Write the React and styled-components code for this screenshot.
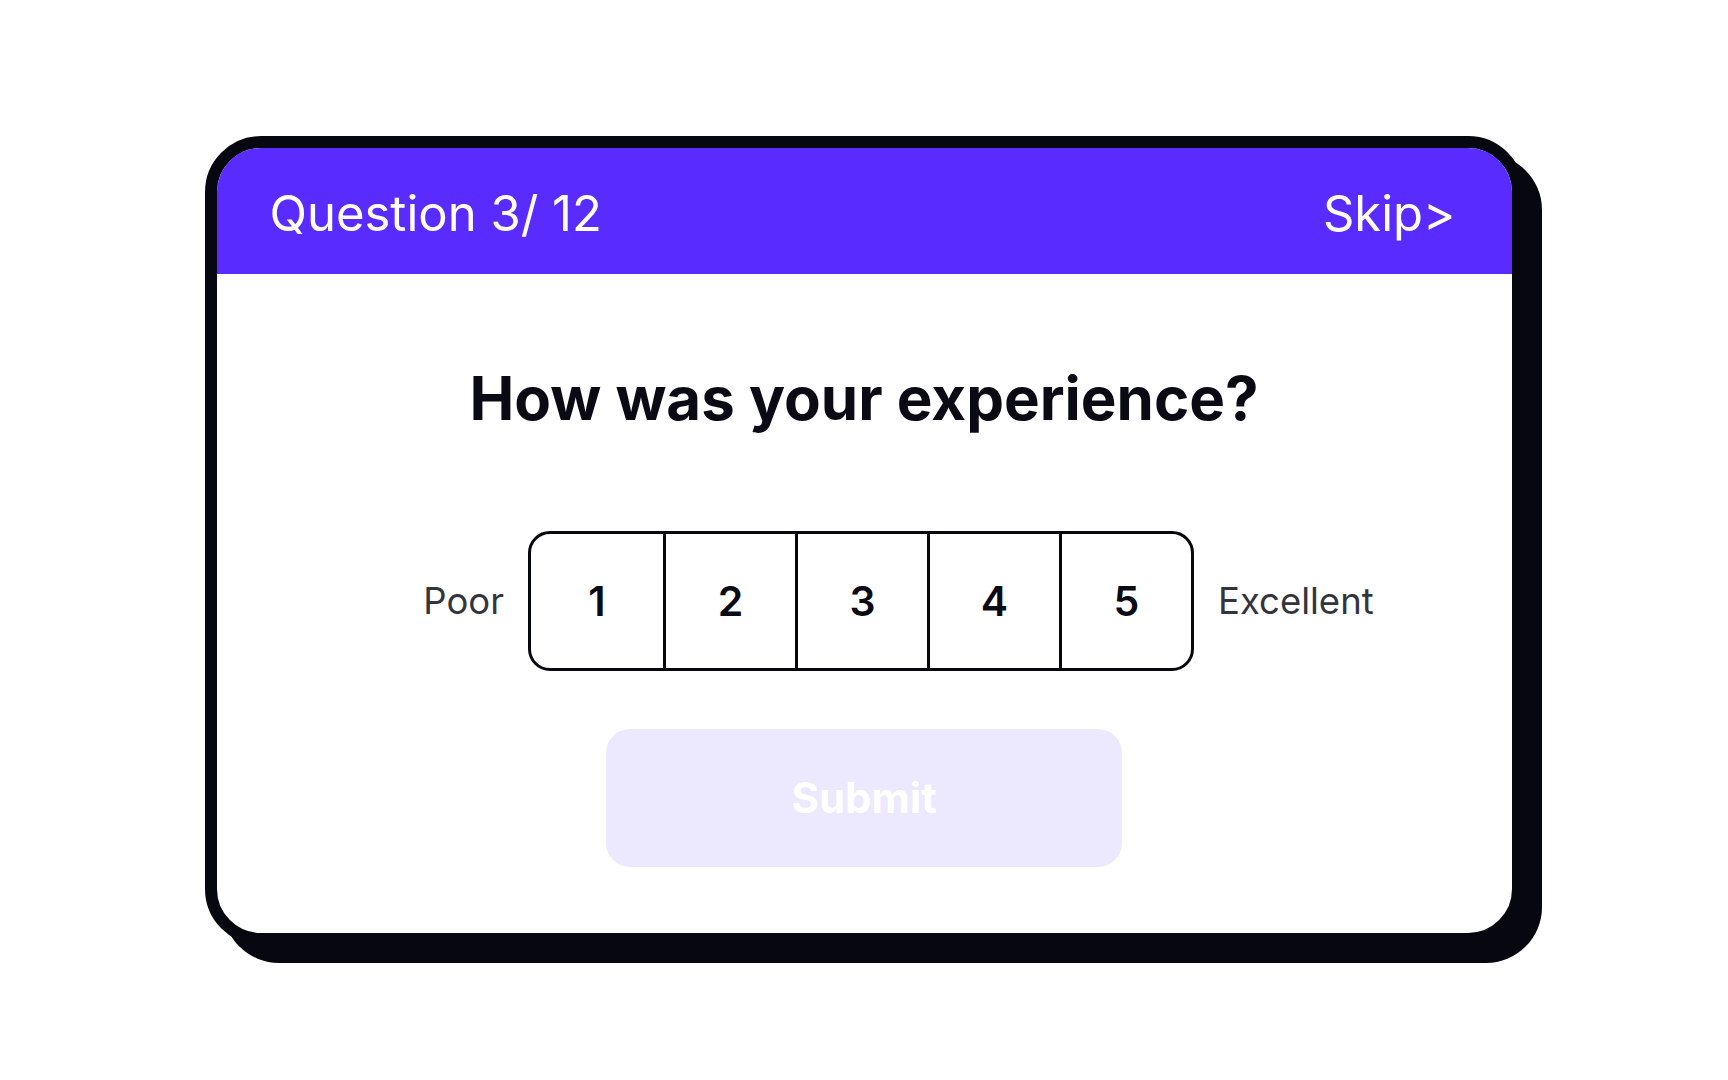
import React from 'react';
import styled, { createGlobalStyle } from 'styled-components';

const GlobalStyle = createGlobalStyle`
    html, body {
        margin: 0;
        padding: 0;
        background: #ffffff;
    }
    body {
        font-family: Inter, "Noto Sans", "Liberation Sans", sans-serif;
    }
    * {
        box-sizing: border-box;
    }
`;

// styles
const Page = styled.div`
    width: 100vw;
    height: 100vh;
    display: flex;
    align-items: center;
    justify-content: center;
`;

const Card = styled.div`
    width: 1319px;
    height: 809px;
    border: 12px solid #07070f;
    border-radius: 56px;
    box-shadow: 18px 18px 0 #07070f;
    background: #ffffff;
    overflow: hidden;
    display: flex;
    flex-direction: column;
`;

const Header = styled.div`
    height: 126px;
    flex-shrink: 0;
    background: #592bff;
    display: flex;
    align-items: center;
    justify-content: space-between;
    padding: 6px 56px 0 53px;
    color: #ffffff;
    font-size: 49px;
    font-weight: 400;
`;

const Body = styled.div`
    flex: 1;
    display: flex;
    flex-direction: column;
    align-items: center;
    padding-top: 94px;
`;

const Title = styled.h1`
    margin: 0;
    font-size: 60px;
    line-height: 1;
    font-weight: 700;
    color: #0a0a14;
`;

const RatingRow = styled.div`
    margin-top: 103px;
    display: grid;
    grid-template-columns: 177px auto 183px;
    column-gap: 24px;
    align-items: center;
`;

const Label = styled.span`
    font-size: 36.5px;
    color: #34343e;
    text-align: ${({ align }) => align};
`;

const Scale = styled.div`
    display: flex;
    height: 140px;
    border: 3px solid #07070f;
    border-radius: 22px;
    overflow: hidden;
`;

const Cell = styled.button`
    width: 132px;
    height: 100%;
    border: none;
    border-left: ${({ first }) => (first ? 'none' : '3px solid #07070f')};
    background: transparent;
    font-family: inherit;
    font-size: 41px;
    font-weight: 600;
    color: #0a0a14;
    display: flex;
    align-items: center;
    justify-content: center;
    padding-top: 2px;
    cursor: pointer;
`;

const Submit = styled.button`
    margin-top: 58px;
    width: 516px;
    height: 138px;
    border: none;
    border-radius: 24px;
    background: #ece8fe;
    color: #ffffff;
    font-family: inherit;
    font-size: 42px;
    font-weight: 700;
`;

const App = () => {
    const scores = [1, 2, 3, 4, 5];

    return (
        <Page>
            <GlobalStyle />
            <Card>
                <Header>
                    <span>Question 3/ 12</span>
                    <span>Skip&gt;</span>
                </Header>
                <Body>
                    <Title>How was your experience?</Title>
                    <RatingRow>
                        <Label align="right">Poor</Label>
                        <Scale>
                            {scores.map((n, i) => (
                                <Cell key={n} first={i === 0}>
                                    {n}
                                </Cell>
                            ))}
                        </Scale>
                        <Label align="left">Excellent</Label>
                    </RatingRow>
                    <Submit disabled>Submit</Submit>
                </Body>
            </Card>
        </Page>
    );
};

export default App;
